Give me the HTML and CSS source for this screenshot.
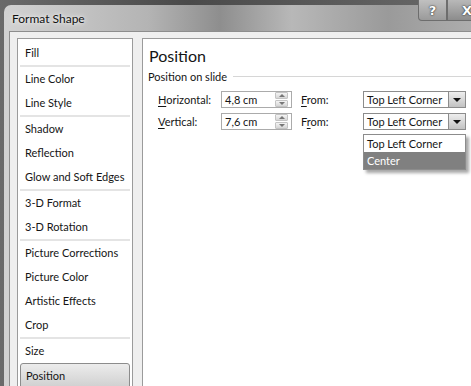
FILE: index.html
```html
<!DOCTYPE html>
<html lang="en">
<head>
    <meta charset="UTF-8">
    <title>Format Shape</title>
    <link rel="stylesheet" href="styles.css">
</head>
<body>
    <div class="window">
        <div class="titlebar">
            <span class="title">Format Shape</span>
            <div class="caption-btns">
                <span class="cap-btn help">?</span>
                <span class="cap-btn close">X</span>
            </div>
        </div>
        <div class="body">
            <div class="nav">
                <div class="item">Fill</div>
                <div class="sep"></div>
                <div class="item">Line Color</div>
                <div class="item">Line Style</div>
                <div class="sep"></div>
                <div class="item">Shadow</div>
                <div class="item">Reflection</div>
                <div class="item">Glow and Soft Edges</div>
                <div class="sep"></div>
                <div class="item">3-D Format</div>
                <div class="item">3-D Rotation</div>
                <div class="sep"></div>
                <div class="item">Picture Corrections</div>
                <div class="item">Picture Color</div>
                <div class="item">Artistic Effects</div>
                <div class="item">Crop</div>
                <div class="sep"></div>
                <div class="item">Size</div>
                <div class="item selected">Position</div>
            </div>
            <div class="panel">
                <h1>Position</h1>
                <div class="section">
                    <span>Position on slide</span>
                    <div class="rule"></div>
                </div>
                <div class="fields">
                    <span class="label"><u>H</u>orizontal:</span>
                    <div class="spin">
                        <span class="value">4,8 cm</span>
                        <div class="spin-btns">
                            <span class="arrow up"></span>
                            <span class="arrow down"></span>
                        </div>
                    </div>
                    <span class="label"><u>F</u>rom:</span>
                    <div class="combo">
                        <span class="value">Top Left Corner</span>
                        <span class="drop"><span class="tri"></span></span>
                    </div>

                    <span class="label"><u>V</u>ertical:</span>
                    <div class="spin">
                        <span class="value">7,6 cm</span>
                        <div class="spin-btns">
                            <span class="arrow up"></span>
                            <span class="arrow down"></span>
                        </div>
                    </div>
                    <span class="label">F<u>r</u>om:</span>
                    <div class="combo open">
                        <span class="value">Top Left Corner</span>
                        <span class="drop"><span class="tri"></span></span>
                        <div class="list">
                            <div class="opt">Top Left Corner</div>
                            <div class="opt hot">Center</div>
                        </div>
                    </div>
                </div>
            </div>
        </div>
    </div>
</body>
</html>
```

FILE: styles.css
```css
html,
body {
    margin: 0;
    width: 471px;
    height: 386px;
    overflow: hidden;
}

body {
    background: linear-gradient(90deg, #6a6a6a, #4a4a4a 40%, #6a6a6a);
    font-family: 'Lato', sans-serif;
    font-size: 11px;
    color: #151515;
}

.window {
    margin: 5px 0 0 4px;
    width: 480px;
    height: 400px;
    border-radius: 7px 7px 0 0;
    background: linear-gradient(90deg, #d2d2d2 0%, #b4b4b4 30%, #8e8e8e 45%, #b8b8b8 60%, #9a9a9a 80%, #b0b0b0 100%);
    padding-left: 5px;
    box-sizing: border-box;
    position: relative;
}

.titlebar {
    height: 26px;
    display: flex;
    align-items: center;
}

.title {
    padding-left: 3px;
    font-size: 12px;
    color: #111;
    text-shadow: 0 0 6px #f0f0f0, 0 0 3px #f0f0f0;
}

.caption-btns {
    position: absolute;
    top: -5px;
    left: 414px;
    display: flex;
}

.cap-btn {
    height: 21px;
    display: flex;
    align-items: center;
    justify-content: center;
    font-family: 'DejaVu Sans', sans-serif;
    font-weight: bold;
    color: #fff;
    font-size: 13px;
    text-shadow: 0 0 2px #333, 0 0 1px #333;
    border: 1px solid #6d6d6d;
    border-top: none;
    box-sizing: border-box;
}

.help {
    width: 29px;
    border-radius: 0 0 0 4px;
    background: linear-gradient(#c0c0c0, #9a9a9a);
}

.close {
    width: 40px;
    justify-content: flex-start;
    padding-left: 14px;
    background: linear-gradient(#b8b8b8, #8c8c8c);
}

.body {
    height: 360px;
    background: #efefef;
    border-top: 1px solid #8d8d8d;
    border-left: 1px solid #8d8d8d;
    padding: 6px 0 0 7px;
    box-sizing: border-box;
    display: flex;
    gap: 9px;
}

.nav {
    width: 116px;
    flex: none;
    background: #fff;
    border: 1px solid #9b9b9b;
    box-sizing: border-box;
    padding-top: 2px;
}

.item {
    height: 24px;
    line-height: 24px;
    padding-left: 7px;
    white-space: nowrap;
}

.sep {
    height: 2px;
    margin: 0 2px;
    background: #e4e4e4;
}

.item.selected {
    margin: 0 2px;
    padding-left: 5px;
    border: 1px solid #8c8c8c;
    border-radius: 3px;
    line-height: 23px;
    background: linear-gradient(#ececec, #cfcfcf);
}

.panel {
    flex: 1;
    background: #fff;
    border: 1px solid #9b9b9b;
    padding: 6px 0 0 6px;
}

h1 {
    margin: 0;
    font-weight: normal;
    font-size: 16px;
    line-height: 22px;
}

.section {
    display: flex;
    align-items: center;
    gap: 6px;
    height: 18px;
    margin-left: -1px;
}

.rule {
    flex: 1;
    height: 1px;
    background: #d6d6d6;
}

.fields {
    display: grid;
    grid-template-columns: 63px 80px 62px 103px;
    grid-auto-rows: 17px;
    row-gap: 5px;
    align-items: center;
    margin: 6px 0 0 9px;
    white-space: nowrap;
}

.label u {
    text-decoration-thickness: 1px;
    text-underline-offset: 2px;
}

.spin {
    width: 71px;
    height: 17px;
    box-sizing: border-box;
    border: 1px solid #ababab;
    display: flex;
    align-items: center;
    justify-content: space-between;
    padding-left: 3px;
}

.spin-btns {
    width: 13px;
    height: 15px;
    margin-right: 3px;
    display: flex;
    flex-direction: column;
    gap: 1px;
}

.arrow {
    flex: 1;
    background: linear-gradient(#f4f4f4, #d6d6d6);
    border: 1px solid #c4c4c4;
    border-radius: 1px;
    position: relative;
}

.arrow::after {
    content: '';
    position: absolute;
    left: 3px;
    top: 1px;
    border-left: 3px solid transparent;
    border-right: 3px solid transparent;
}

.arrow.up::after {
    border-bottom: 3px solid #777;
}

.arrow.down::after {
    border-top: 3px solid #777;
}

.combo {
    width: 103px;
    height: 17px;
    box-sizing: border-box;
    border: 1px solid #8c8c8c;
    display: flex;
    align-items: center;
    justify-content: space-between;
    padding-left: 3px;
    position: relative;
}

.drop {
    width: 16px;
    height: 15px;
    border-left: 1px solid #8c8c8c;
    background: linear-gradient(#eeeeee, #c2c2c2);
    display: flex;
    align-items: center;
    justify-content: center;
}

.tri {
    border-left: 4px solid transparent;
    border-right: 4px solid transparent;
    border-top: 4px solid #111;
}

.list {
    position: absolute;
    top: 20px;
    left: -1px;
    width: 103px;
    background: #fff;
    border: 1px solid #8c8c8c;
    box-sizing: border-box;
    box-shadow: 3px 3px 3px rgba(0, 0, 0, 0.35);
}

.opt {
    height: 17px;
    line-height: 17px;
    padding-left: 3px;
}

.opt.hot {
    background: #808080;
    color: #fff;
}
```
